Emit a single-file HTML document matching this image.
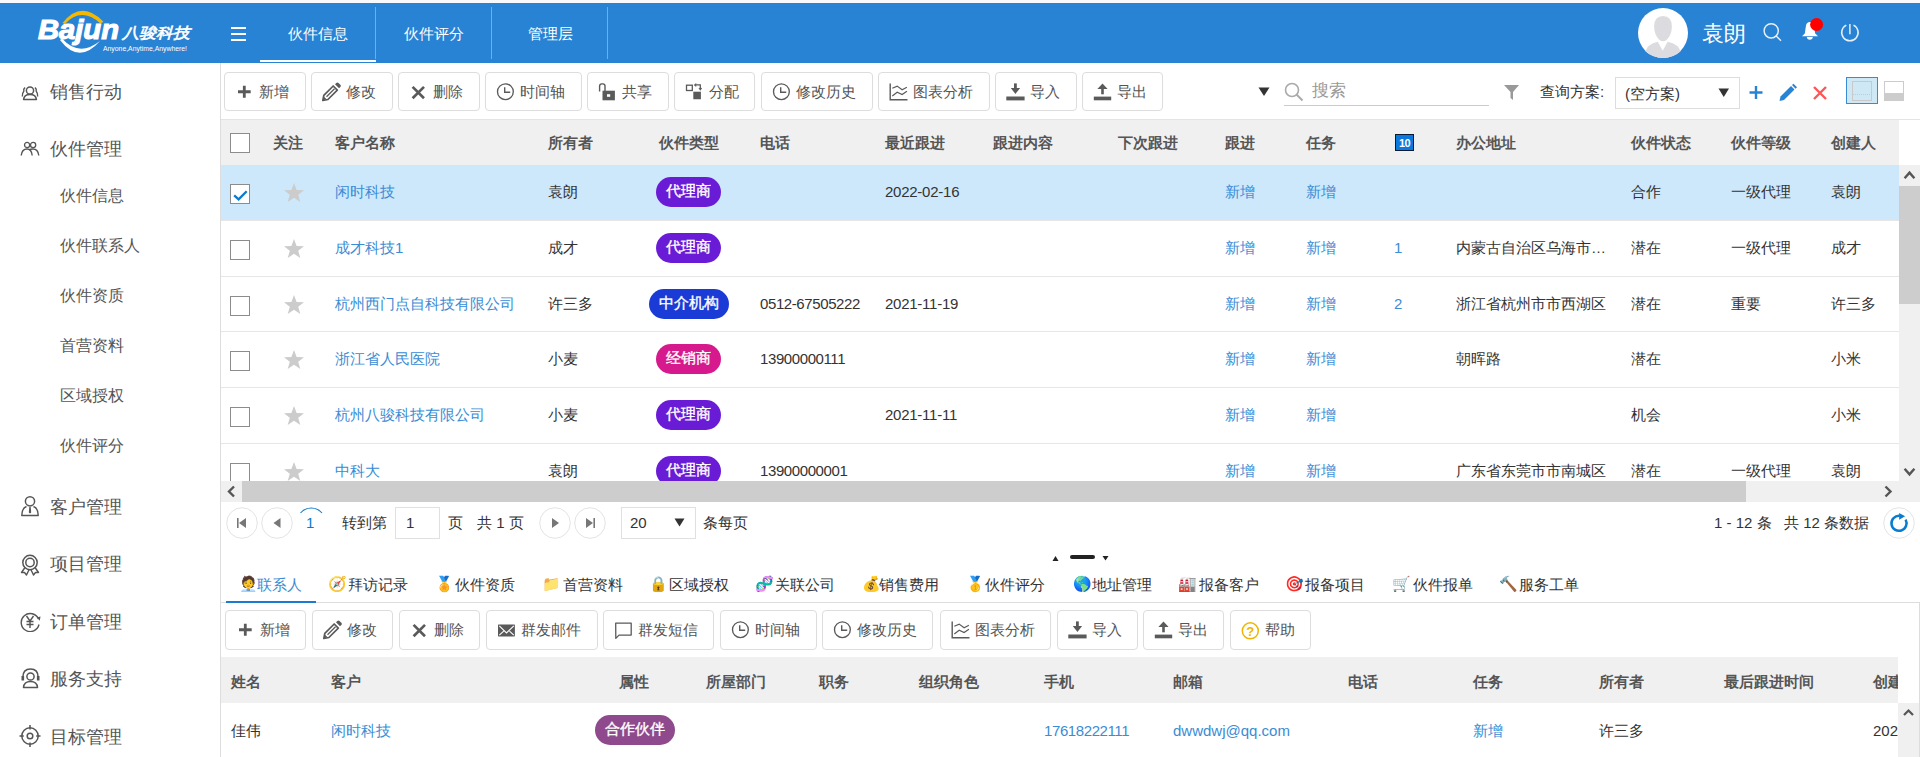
<!DOCTYPE html><html><head><meta charset="utf-8"><style>
html,body{margin:0;padding:0;width:1920px;height:757px;overflow:hidden;background:#fff;font-family:"Liberation Sans",sans-serif;}
.a{position:absolute;box-sizing:border-box;}
.t{position:absolute;white-space:nowrap;}
svg text{font-family:"Liberation Sans",sans-serif;}
</style></head><body>

<div class="a" style="left:0px;top:0px;width:1920px;height:3px;background:#f8f9fa"></div>
<div class="a" style="left:0px;top:3px;width:1920px;height:59.7px;background:#2883d4"></div>
<svg class="a" style="left:34px;top:8px;" width="160" height="48" viewBox="0 0 160 48">
<path d="M28.5 15 Q47.5 -8.75 69.5 13.7 L66.5 15.5 Q47 -1.5 31 16 Z" fill="#f5b800"/>
<path d="M26 32 Q45 57 66 33 Q45 49.5 28 30.5 Z" fill="#fff"/>
<text x="4" y="30.5" font-family="Liberation Sans" font-weight="bold" font-style="italic" font-size="27" fill="#fff" stroke="#fff" stroke-width="1.1" textLength="81" lengthAdjust="spacingAndGlyphs">Bajun</text>
<text x="88" y="29.8" font-size="15" fill="#fff" stroke="#fff" stroke-width="0.6" font-style="italic" textLength="68" lengthAdjust="spacingAndGlyphs">八骏科技</text>
<text x="69" y="42.5" font-family="Liberation Sans" font-size="7.2" fill="#fff" textLength="84" lengthAdjust="spacingAndGlyphs">Anyone,Anytime,Anywhere!</text>
</svg>
<div class="a" style="left:231px;top:27px;width:15px;height:2px;background:#fff"></div>
<div class="a" style="left:231px;top:33px;width:15px;height:2px;background:#fff"></div>
<div class="a" style="left:231px;top:39px;width:15px;height:2px;background:#fff"></div>
<div class="a" style="left:375px;top:7px;width:1px;height:52px;background:rgba(255,255,255,0.35)"></div>
<div class="t" style="left:260px;top:22px;width:116px;text-align:center;font-size:15px;line-height:24px;color:#fff">伙件信息</div>
<div class="a" style="left:491px;top:7px;width:1px;height:52px;background:rgba(255,255,255,0.35)"></div>
<div class="t" style="left:376px;top:22px;width:116px;text-align:center;font-size:15px;line-height:24px;color:#fff">伙件评分</div>
<div class="a" style="left:607px;top:7px;width:1px;height:52px;background:rgba(255,255,255,0.35)"></div>
<div class="t" style="left:492px;top:22px;width:116px;text-align:center;font-size:15px;line-height:24px;color:#fff">管理层</div>
<div class="a" style="left:260px;top:59.5px;width:116px;height:2.5px;background:#fff"></div>
<svg class="a" style="left:1638px;top:8px;" width="50" height="50" viewBox="0 0 50 50"><circle cx="25" cy="25" r="25" fill="#fff"/>
<path d="M25 7.9 Q33.9 7.9 33.9 18.5 Q33.6 27 28.8 31.8 Q25 34.8 21.2 31.8 Q16.4 27 16.1 18.5 Q16.1 7.9 25 7.9Z" fill="#dcdce0"/>
<path d="M7.5 43.5 Q9 36.5 19.8 33.8 L24.7 42.7 L29.7 33.8 Q41 36.5 42.5 43.5 Q35 50 25 50 Q15 50 7.5 43.5Z" fill="#dcdce0"/></svg>
<div class="t" style="left:1701.5px;top:18.5px;font-size:21.5px;line-height:30px;color:#fff;font-weight:normal;">袁朗</div>
<svg class="a" style="left:1762px;top:22px;" width="22" height="22" viewBox="0 0 22 22"><circle cx="9.2" cy="8.85" r="7.1" fill="none" stroke="#e9eff6" stroke-width="1.45"/><line x1="14.2" y1="13.9" x2="19" y2="18.8" stroke="#e9eff6" stroke-width="1.45"/></svg>
<svg class="a" style="left:1800px;top:16px;" width="26" height="28" viewBox="0 0 26 28"><path d="M2 20.3 L4.8 17.5 L6 9.5 Q6.6 5.9 10 5.9 Q13.4 5.9 14 9.5 L15.2 17.5 L18 20.3 Z" fill="#fff"/><path d="M6.8 21 H12.8 Q12.5 23.8 9.8 23.8 Q7.1 23.8 6.8 21 Z" fill="#fff"/><circle cx="16.6" cy="8.5" r="6.5" fill="#f00"/></svg>
<svg class="a" style="left:1840px;top:22px;" width="22" height="22" viewBox="0 0 22 22"><path d="M6.3 3.2 A8.2 8.2 0 1 0 13.5 3.2" fill="none" stroke="#e9eff6" stroke-width="1.5"/><line x1="9.9" y1="2" x2="9.9" y2="12.2" stroke="#e9eff6" stroke-width="1.5"/></svg>
<div class="t" style="left:50px;top:78.0px;font-size:18px;line-height:28px;color:#555;font-weight:normal;">销售行动</div>
<svg class="a" style="left:20px;top:84px;" width="20" height="20" viewBox="0 0 20 20"><circle cx="10" cy="6.5" r="3.6" fill="none" stroke="#555" stroke-width="1.5"/><path d="M3.6 15.5 Q4 10.5 10 10.5 Q16 10.5 16.4 15.5 Z" fill="none" stroke="#555" stroke-width="1.6" stroke-linejoin="round"/><path d="M5.2 3.6 Q3.4 4.4 3.8 7.2 Q2.2 8.8 2.3 12.5" fill="none" stroke="#555" stroke-width="1.35"/><path d="M14.8 3.6 Q16.6 4.4 16.2 7.2 Q17.8 8.8 17.7 12.5" fill="none" stroke="#555" stroke-width="1.35"/></svg>
<div class="t" style="left:50px;top:135.0px;font-size:18px;line-height:28px;color:#555;font-weight:normal;">伙件管理</div>
<svg class="a" style="left:20px;top:140px;" width="20" height="17" viewBox="0 0 20 17"><circle cx="7.1" cy="5" r="2.6" fill="none" stroke="#555" stroke-width="1.3"/><circle cx="13.1" cy="5" r="2.6" fill="none" stroke="#555" stroke-width="1.3"/><path d="M1.2 15.5 Q2 9 7 9 Q11.5 9 12.2 15.5" fill="none" stroke="#555" stroke-width="1.4"/><path d="M9.5 9.6 Q10.5 9 13 9 Q18 9 18.8 15.5" fill="none" stroke="#555" stroke-width="1.4"/></svg>
<div class="t" style="left:50px;top:493.0px;font-size:18px;line-height:28px;color:#555;font-weight:normal;">客户管理</div>
<svg class="a" style="left:20px;top:495px;" width="20" height="22" viewBox="0 0 20 22"><circle cx="10" cy="6.3" r="4.6" fill="none" stroke="#555" stroke-width="1.5"/><path d="M6.5 11.5 Q2 13 1.8 20.5 H18.2 Q18 13 13.5 11.5" fill="none" stroke="#555" stroke-width="1.5" stroke-linejoin="round"/><path d="M9.3 12 H10.7 L11.2 17.5 L10 18.5 L8.8 17.5 Z" fill="#555"/></svg>
<div class="t" style="left:50px;top:550.0px;font-size:18px;line-height:28px;color:#555;font-weight:normal;">项目管理</div>
<svg class="a" style="left:20px;top:554px;" width="20" height="22" viewBox="0 0 20 22"><circle cx="10" cy="8.5" r="7.2" fill="none" stroke="#555" stroke-width="1.5"/><circle cx="10" cy="8.5" r="4.2" fill="none" stroke="#555" stroke-width="1.5"/><path d="M5 13.5 L1.5 18.5 L4.5 18.5 L6.5 21 L9 15.8 M15 13.5 L18.5 18.5 L15.5 18.5 L13.5 21 L11 15.8" fill="none" stroke="#555" stroke-width="1.4" stroke-linejoin="round"/></svg>
<div class="t" style="left:50px;top:608.0px;font-size:18px;line-height:28px;color:#555;font-weight:normal;">订单管理</div>
<svg class="a" style="left:20px;top:611px;" width="21" height="21" viewBox="0 0 21 21"><path d="M18.5 8 A9 9 0 1 0 19 13.5" fill="none" stroke="#555" stroke-width="1.4"/><path d="M16.8 6.5 L19.8 9.8 L20.5 5.5 Z" fill="#555"/><path d="M6.5 5 L10 10 L13.5 5 M10 10 V17 M6.5 10.5 H13.5 M6.5 13.5 H13.5" fill="none" stroke="#555" stroke-width="1.4"/></svg>
<div class="t" style="left:50px;top:665.0px;font-size:18px;line-height:28px;color:#555;font-weight:normal;">服务支持</div>
<svg class="a" style="left:20px;top:667px;" width="21" height="22" viewBox="0 0 21 22"><path d="M2.8 10.5 Q2.8 2 10.5 2 Q18.2 2 18.2 10.5" fill="none" stroke="#555" stroke-width="1.5"/><rect x="1.5" y="9" width="2.6" height="4.5" fill="#555"/><rect x="16.9" y="9" width="2.6" height="4.5" fill="#555"/><circle cx="10.5" cy="9.5" r="3.6" fill="none" stroke="#555" stroke-width="1.5"/><path d="M3.5 20.5 Q4 14.5 10.5 14.5 Q17 14.5 17.5 20.5 Z" fill="none" stroke="#555" stroke-width="1.5" stroke-linejoin="round"/></svg>
<div class="t" style="left:50px;top:723.0px;font-size:18px;line-height:28px;color:#555;font-weight:normal;">目标管理</div>
<svg class="a" style="left:19px;top:723px;" width="22" height="26" viewBox="0 0 22 26"><circle cx="11" cy="13" r="8.2" fill="none" stroke="#555" stroke-width="1.5"/><circle cx="11" cy="13" r="2.8" fill="none" stroke="#555" stroke-width="1.5"/><path d="M11 2 V6.5 M11 19.5 V24 M0.5 13 H4.8 M17.2 13 H21.5" stroke="#555" stroke-width="1.5"/></svg>
<div class="t" style="left:60px;top:184.0px;font-size:16px;line-height:24px;color:#555;font-weight:normal;">伙件信息</div>
<div class="t" style="left:60px;top:234.0px;font-size:16px;line-height:24px;color:#555;font-weight:normal;">伙件联系人</div>
<div class="t" style="left:60px;top:284.0px;font-size:16px;line-height:24px;color:#555;font-weight:normal;">伙件资质</div>
<div class="t" style="left:60px;top:334.0px;font-size:16px;line-height:24px;color:#555;font-weight:normal;">首营资料</div>
<div class="t" style="left:60px;top:384.0px;font-size:16px;line-height:24px;color:#555;font-weight:normal;">区域授权</div>
<div class="t" style="left:60px;top:434.0px;font-size:16px;line-height:24px;color:#555;font-weight:normal;">伙件评分</div>
<div class="a" style="left:220px;top:63px;width:1px;height:694px;background:#ddd"></div>
<div class="a" style="left:224px;top:72px;width:82px;height:39px;border:1px solid #ddd;border-radius:4px;background:#fff"></div>
<svg class="a" style="left:235px;top:81.5px;" width="20" height="20" viewBox="0 0 20 20"><path d="M9.3 3.7 V15.8 M3 9.75 H15.7" stroke="#5a5a5a" stroke-width="2.8" fill="none"/></svg>
<div class="t" style="left:259px;top:80.5px;font-size:15px;line-height:22px;color:#555;font-weight:normal;">新增</div>
<div class="a" style="left:311px;top:72px;width:82px;height:39px;border:1px solid #ddd;border-radius:4px;background:#fff"></div>
<svg class="a" style="left:322px;top:81.5px;" width="20" height="20" viewBox="0 0 20 20"><path d="M1.8 13.4 L11.2 4 L15.3 8.1 L5.9 17.5 L0.8 18.5 Z" fill="none" stroke="#5a5a5a" stroke-width="1.7" stroke-linejoin="round"/><path d="M1.2 18.1 L1.8 14.6 L4.8 17.5 Z" fill="#5a5a5a"/><path d="M13 2.2 L14.3 0.9 Q15.4 -0.1 16.5 1 L18.3 2.8 Q19.4 3.9 18.3 5 L17 6.3 Z" fill="#5a5a5a"/><path d="M4.5 14.8 L12.5 6.8" stroke="#5a5a5a" stroke-width="1.3"/></svg>
<div class="t" style="left:346px;top:80.5px;font-size:15px;line-height:22px;color:#555;font-weight:normal;">修改</div>
<div class="a" style="left:398px;top:72px;width:82px;height:39px;border:1px solid #ddd;border-radius:4px;background:#fff"></div>
<svg class="a" style="left:409px;top:81.5px;" width="20" height="20" viewBox="0 0 20 20"><path d="M3.6 4.9 L15 16.2 M15 4.9 L3.6 16.2" stroke="#5a5a5a" stroke-width="2.7" fill="none"/></svg>
<div class="t" style="left:433px;top:80.5px;font-size:15px;line-height:22px;color:#555;font-weight:normal;">删除</div>
<div class="a" style="left:485px;top:72px;width:97px;height:39px;border:1px solid #ddd;border-radius:4px;background:#fff"></div>
<svg class="a" style="left:496px;top:81.5px;" width="20" height="20" viewBox="0 0 20 20"><circle cx="9.4" cy="9.7" r="7.9" fill="none" stroke="#5a5a5a" stroke-width="1.35"/><path d="M8.7 5.2 V10.2 H14.2" stroke="#5a5a5a" stroke-width="1.4" fill="none"/></svg>
<div class="t" style="left:520px;top:80.5px;font-size:15px;line-height:22px;color:#555;font-weight:normal;">时间轴</div>
<div class="a" style="left:587px;top:72px;width:82px;height:39px;border:1px solid #ddd;border-radius:4px;background:#fff"></div>
<svg class="a" style="left:598px;top:81.5px;" width="20" height="20" viewBox="0 0 20 20"><path d="M1.6 9.4 V4.1 Q1.6 1.9 3.8 1.9 H4.9 Q7 1.9 7 4.1 V9" stroke="#5a5a5a" stroke-width="1.4" fill="none"/><rect x="4.5" y="8.7" width="12.4" height="9.6" fill="#5a5a5a"/><rect x="9" y="12.2" width="3.2" height="2.6" fill="#fff"/></svg>
<div class="t" style="left:622px;top:80.5px;font-size:15px;line-height:22px;color:#555;font-weight:normal;">共享</div>
<div class="a" style="left:674px;top:72px;width:81px;height:39px;border:1px solid #ddd;border-radius:4px;background:#fff"></div>
<svg class="a" style="left:685px;top:81.5px;" width="20" height="20" viewBox="0 0 20 20"><rect x="1.5" y="3.2" width="5.8" height="5.3" fill="none" stroke="#5a5a5a" stroke-width="1.3"/><rect x="8.3" y="9.7" width="7.6" height="7.55" fill="#5a5a5a"/><path d="M10.2 2.9 H15.3 V7" stroke="#5a5a5a" stroke-width="1.3" fill="none"/><path d="M11.3 1.6 L9.6 2.9 L11.3 4.2 M14 6 L15.3 7.8 L16.6 6" stroke="#5a5a5a" stroke-width="1.1" fill="none"/></svg>
<div class="t" style="left:709px;top:80.5px;font-size:15px;line-height:22px;color:#555;font-weight:normal;">分配</div>
<div class="a" style="left:761px;top:72px;width:112px;height:39px;border:1px solid #ddd;border-radius:4px;background:#fff"></div>
<svg class="a" style="left:772px;top:81.5px;" width="20" height="20" viewBox="0 0 20 20"><circle cx="9.4" cy="9.7" r="7.9" fill="none" stroke="#5a5a5a" stroke-width="1.35"/><path d="M8.7 5.2 V10.2 H14.2" stroke="#5a5a5a" stroke-width="1.4" fill="none"/></svg>
<div class="t" style="left:796px;top:80.5px;font-size:15px;line-height:22px;color:#555;font-weight:normal;">修改历史</div>
<div class="a" style="left:878px;top:72px;width:112px;height:39px;border:1px solid #ddd;border-radius:4px;background:#fff"></div>
<svg class="a" style="left:889px;top:81.5px;" width="20" height="20" viewBox="0 0 20 20"><path d="M1.2 1.5 V17.8 H18.5" stroke="#5a5a5a" stroke-width="1.4" fill="none"/><path d="M3.3 6.3 L8.2 4.1 L13.1 7.7 L17.9 5.3 M3.3 13.9 L8.2 10.2 L13.1 12.6 L17.9 9.3" stroke="#5a5a5a" stroke-width="1.2" fill="none"/></svg>
<div class="t" style="left:913px;top:80.5px;font-size:15px;line-height:22px;color:#555;font-weight:normal;">图表分析</div>
<div class="a" style="left:995px;top:72px;width:82px;height:39px;border:1px solid #ddd;border-radius:4px;background:#fff"></div>
<svg class="a" style="left:1006px;top:81.5px;" width="20" height="20" viewBox="0 0 20 20"><rect x="8" y="1.4" width="2.8" height="5" fill="#5a5a5a"/><path d="M4.8 5.9 H14.1 L9.45 11.9 Z" fill="#5a5a5a"/><rect x="0.3" y="14.5" width="18.3" height="3.9" fill="#5a5a5a"/></svg>
<div class="t" style="left:1030px;top:80.5px;font-size:15px;line-height:22px;color:#555;font-weight:normal;">导入</div>
<div class="a" style="left:1082px;top:72px;width:81px;height:39px;border:1px solid #ddd;border-radius:4px;background:#fff"></div>
<svg class="a" style="left:1093px;top:81.5px;" width="20" height="20" viewBox="0 0 20 20"><path d="M9.5 1.4 L14.6 7.1 H4.4 Z" fill="#5a5a5a"/><rect x="8.2" y="7" width="2.6" height="5.3" fill="#5a5a5a"/><rect x="0.8" y="14.6" width="17.4" height="3.7" fill="#5a5a5a"/></svg>
<div class="t" style="left:1117px;top:80.5px;font-size:15px;line-height:22px;color:#555;font-weight:normal;">导出</div>
<svg class="a" style="left:1258px;top:87px;" width="13" height="10" viewBox="0 0 13 10"><path d="M0.5 0.5 H11.5 L6 9 Z" fill="#333"/></svg>
<svg class="a" style="left:1284px;top:82px;" width="22" height="22" viewBox="0 0 22 22"><circle cx="8" cy="8" r="6.5" fill="none" stroke="#aaa" stroke-width="1.6"/><line x1="12.5" y1="12.5" x2="18.5" y2="18.5" stroke="#aaa" stroke-width="2"/></svg>
<div class="t" style="left:1312px;top:79.0px;font-size:17px;line-height:24px;color:#999;font-weight:normal;">搜索</div>
<div class="a" style="left:1284px;top:105px;width:205px;height:1px;background:#ccc"></div>
<svg class="a" style="left:1503px;top:84px;" width="18" height="18" viewBox="0 0 18 18"><path d="M1 1 H16 L10 8 V16 L7.5 14 V8 Z" fill="#999"/></svg>
<div class="t" style="left:1540px;top:81.0px;font-size:15px;line-height:22px;color:#333;font-weight:normal;">查询方案:</div>
<div class="a" style="left:1615px;top:77px;width:125px;height:32px;border:1px solid #ddd;background:#fff"></div>
<div class="t" style="left:1625px;top:83.0px;font-size:15px;line-height:22px;color:#333;font-weight:normal;">(空方案)</div>
<svg class="a" style="left:1718px;top:88px;" width="12" height="10" viewBox="0 0 12 10"><path d="M0.5 0.5 H11 L5.75 9 Z" fill="#333"/></svg>
<svg class="a" style="left:1748px;top:84px;" width="16" height="16" viewBox="0 0 16 16"><path d="M8 2 V15 M1.5 8.5 H14.5" stroke="#2883d4" stroke-width="2.4"/></svg>
<svg class="a" style="left:1778px;top:83px;" width="20" height="20" viewBox="0 0 20 20"><path d="M1.5 18 L2.5 13.5 L13 3 L16.5 6.5 L6 17 Z" fill="#2883d4"/><path d="M14 2 L15.5 0.8 L19 4.3 L17.5 5.8Z" fill="#2883d4"/></svg>
<svg class="a" style="left:1812px;top:85px;" width="16" height="16" viewBox="0 0 16 16"><path d="M2 2 L14 14 M14 2 L2 14" stroke="#f55" stroke-width="2.4"/></svg>
<div class="a" style="left:1846px;top:77px;width:32px;height:27px;border:1.5px solid #3a8bd6;background:#cfe8f5"></div>
<div class="a" style="left:1852px;top:81px;width:20px;height:20px;border:1px solid #cdc8c8;"></div>
<div class="a" style="left:1852px;top:93.5px;width:20px;height:1px;border-top:1px dotted #cdc8c8;"></div>
<div class="a" style="left:1884px;top:81px;width:20px;height:20px;border:1.5px solid #ccc;background:linear-gradient(#fff 0 60%,#ccc 60%)"></div>
<div class="a" style="left:221px;top:119px;width:1678px;height:46px;background:#f0f0f0"></div>
<div class="a" style="left:221px;top:119px;width:1699px;height:1px;background:#e3e3e3"></div>
<div class="t" style="left:273px;top:132.0px;font-size:15px;line-height:22px;color:#555;font-weight:bold;">关注</div>
<div class="t" style="left:335px;top:132.0px;font-size:15px;line-height:22px;color:#555;font-weight:bold;">客户名称</div>
<div class="t" style="left:548px;top:132.0px;font-size:15px;line-height:22px;color:#555;font-weight:bold;">所有者</div>
<div class="t" style="left:659px;top:132.0px;font-size:15px;line-height:22px;color:#555;font-weight:bold;">伙件类型</div>
<div class="t" style="left:760px;top:132.0px;font-size:15px;line-height:22px;color:#555;font-weight:bold;">电话</div>
<div class="t" style="left:885px;top:132.0px;font-size:15px;line-height:22px;color:#555;font-weight:bold;">最近跟进</div>
<div class="t" style="left:993px;top:132.0px;font-size:15px;line-height:22px;color:#555;font-weight:bold;">跟进内容</div>
<div class="t" style="left:1118px;top:132.0px;font-size:15px;line-height:22px;color:#555;font-weight:bold;">下次跟进</div>
<div class="t" style="left:1225px;top:132.0px;font-size:15px;line-height:22px;color:#555;font-weight:bold;">跟进</div>
<div class="t" style="left:1306px;top:132.0px;font-size:15px;line-height:22px;color:#555;font-weight:bold;">任务</div>
<div class="t" style="left:1456px;top:132.0px;font-size:15px;line-height:22px;color:#555;font-weight:bold;">办公地址</div>
<div class="t" style="left:1631px;top:132.0px;font-size:15px;line-height:22px;color:#555;font-weight:bold;">伙件状态</div>
<div class="t" style="left:1731px;top:132.0px;font-size:15px;line-height:22px;color:#555;font-weight:bold;">伙件等级</div>
<div class="t" style="left:1831px;top:132.0px;font-size:15px;line-height:22px;color:#555;font-weight:bold;">创建人</div>
<div class="a" style="left:230px;top:133px;width:20px;height:20px;border:1px solid #8c8c8c;background:#fff"></div>
<svg class="a" style="left:1395px;top:134px;" width="19" height="17" viewBox="0 0 19 17"><rect x="0.5" y="0.5" width="18" height="16" fill="#0a78dc" stroke="#0b1a33" stroke-width="1"/><text x="9.6" y="12.8" text-anchor="middle" font-weight="bold" font-size="11" fill="#fff" letter-spacing="-0.6">10</text></svg>
<div class="a" style="left:221px;top:165px;width:1678px;height:316px;overflow:hidden">
<div class="a" style="left:0;top:0px;width:1678px;height:56px;background:#cde8fb;border-bottom:1px solid #e6e6e6"></div>
<div class="a" style="left:0;top:56px;width:1678px;height:56px;background:#fff;border-bottom:1px solid #e6e6e6"></div>
<div class="a" style="left:0;top:112px;width:1678px;height:55px;background:#fff;border-bottom:1px solid #e6e6e6"></div>
<div class="a" style="left:0;top:167px;width:1678px;height:56px;background:#fff;border-bottom:1px solid #e6e6e6"></div>
<div class="a" style="left:0;top:223px;width:1678px;height:56px;background:#fff;border-bottom:1px solid #e6e6e6"></div>
<div class="a" style="left:0;top:279px;width:1678px;height:55px;background:#fff;border-bottom:1px solid #e6e6e6"></div>
</div>
<div class="a" style="left:0;top:165px;width:1899px;height:316px;overflow:hidden">
<div class="a" style="left:230px;top:19px;width:20px;height:20px;border:1px solid #8c8c8c;background:#fff"></div>
<svg class="a" style="left:230px;top:19px;" width="20" height="20" viewBox="0 0 20 20"><path d="M4.2 11.3 L8.6 15.3 L16.7 7.2" stroke="#0a7bd0" stroke-width="2.3" fill="none"/></svg>
<svg class="a" style="left:283px;top:16.69999999999999px;" width="22" height="21" viewBox="0 0 22 21"><path d="M11 1 L13.6 8 L21 8.2 L15.2 12.8 L17.3 20 L11 15.8 L4.7 20 L6.8 12.8 L1 8.2 L8.4 8 Z" fill="#ccc"/></svg>
<div class="t" style="left:335px;top:16.2px;font-size:15px;line-height:22px;color:#3a8cd5;font-weight:normal;">闲时科技</div>
<div class="t" style="left:548px;top:16.2px;font-size:15px;line-height:22px;color:#333;font-weight:normal;">袁朗</div>
<div class="t" style="left:656px;top:12.2px;width:65px;height:30px;border-radius:15px;background:#6a1bd6;color:#fff;font-size:15px;line-height:28px;-webkit-text-stroke:0.35px #fff;text-align:center">代理商</div>
<div class="t" style="left:885px;top:16.2px;font-size:15px;line-height:22px;color:#333;font-weight:normal;letter-spacing:-0.25px">2022-02-16</div>
<div class="t" style="left:1225px;top:16.2px;font-size:15px;line-height:22px;color:#3a8cd5;font-weight:normal;">新增</div>
<div class="t" style="left:1306px;top:16.2px;font-size:15px;line-height:22px;color:#3a8cd5;font-weight:normal;">新增</div>
<div class="t" style="left:1631px;top:16.2px;font-size:15px;line-height:22px;color:#333;font-weight:normal;">合作</div>
<div class="t" style="left:1731px;top:16.2px;font-size:15px;line-height:22px;color:#333;font-weight:normal;">一级代理</div>
<div class="t" style="left:1831px;top:16.2px;font-size:15px;line-height:22px;color:#333;font-weight:normal;">袁朗</div>
<div class="a" style="left:230px;top:75px;width:20px;height:20px;border:1px solid #8c8c8c;background:#fff"></div>
<svg class="a" style="left:283px;top:72.69999999999999px;" width="22" height="21" viewBox="0 0 22 21"><path d="M11 1 L13.6 8 L21 8.2 L15.2 12.8 L17.3 20 L11 15.8 L4.7 20 L6.8 12.8 L1 8.2 L8.4 8 Z" fill="#ccc"/></svg>
<div class="t" style="left:335px;top:72.2px;font-size:15px;line-height:22px;color:#3a8cd5;font-weight:normal;">成才科技1</div>
<div class="t" style="left:548px;top:72.2px;font-size:15px;line-height:22px;color:#333;font-weight:normal;">成才</div>
<div class="t" style="left:656px;top:68.2px;width:65px;height:30px;border-radius:15px;background:#6a1bd6;color:#fff;font-size:15px;line-height:28px;-webkit-text-stroke:0.35px #fff;text-align:center">代理商</div>
<div class="t" style="left:1225px;top:72.2px;font-size:15px;line-height:22px;color:#3a8cd5;font-weight:normal;">新增</div>
<div class="t" style="left:1306px;top:72.2px;font-size:15px;line-height:22px;color:#3a8cd5;font-weight:normal;">新增</div>
<div class="t" style="left:1394px;top:72.2px;font-size:15px;line-height:22px;color:#3a8cd5;font-weight:normal;">1</div>
<div class="t" style="left:1456px;top:72.2px;font-size:15px;line-height:22px;color:#333;font-weight:normal;">内蒙古自治区乌海市…</div>
<div class="t" style="left:1631px;top:72.2px;font-size:15px;line-height:22px;color:#333;font-weight:normal;">潜在</div>
<div class="t" style="left:1731px;top:72.2px;font-size:15px;line-height:22px;color:#333;font-weight:normal;">一级代理</div>
<div class="t" style="left:1831px;top:72.2px;font-size:15px;line-height:22px;color:#333;font-weight:normal;">成才</div>
<div class="a" style="left:230px;top:131px;width:20px;height:20px;border:1px solid #8c8c8c;background:#fff"></div>
<svg class="a" style="left:283px;top:128.7px;" width="22" height="21" viewBox="0 0 22 21"><path d="M11 1 L13.6 8 L21 8.2 L15.2 12.8 L17.3 20 L11 15.8 L4.7 20 L6.8 12.8 L1 8.2 L8.4 8 Z" fill="#ccc"/></svg>
<div class="t" style="left:335px;top:128.2px;font-size:15px;line-height:22px;color:#3a8cd5;font-weight:normal;">杭州西门点自科技有限公司</div>
<div class="t" style="left:548px;top:128.2px;font-size:15px;line-height:22px;color:#333;font-weight:normal;">许三多</div>
<div class="t" style="left:649px;top:124.2px;width:80px;height:30px;border-radius:15px;background:#1a3bd6;color:#fff;font-size:15px;line-height:28px;-webkit-text-stroke:0.35px #fff;text-align:center">中介机构</div>
<div class="t" style="left:760px;top:128.2px;font-size:15px;line-height:22px;color:#333;font-weight:normal;letter-spacing:-0.4px">0512-67505222</div>
<div class="t" style="left:885px;top:128.2px;font-size:15px;line-height:22px;color:#333;font-weight:normal;letter-spacing:-0.25px">2021-11-19</div>
<div class="t" style="left:1225px;top:128.2px;font-size:15px;line-height:22px;color:#3a8cd5;font-weight:normal;">新增</div>
<div class="t" style="left:1306px;top:128.2px;font-size:15px;line-height:22px;color:#3a8cd5;font-weight:normal;">新增</div>
<div class="t" style="left:1394px;top:128.2px;font-size:15px;line-height:22px;color:#3a8cd5;font-weight:normal;">2</div>
<div class="t" style="left:1456px;top:128.2px;font-size:15px;line-height:22px;color:#333;font-weight:normal;">浙江省杭州市市西湖区</div>
<div class="t" style="left:1631px;top:128.2px;font-size:15px;line-height:22px;color:#333;font-weight:normal;">潜在</div>
<div class="t" style="left:1731px;top:128.2px;font-size:15px;line-height:22px;color:#333;font-weight:normal;">重要</div>
<div class="t" style="left:1831px;top:128.2px;font-size:15px;line-height:22px;color:#333;font-weight:normal;">许三多</div>
<div class="a" style="left:230px;top:186px;width:20px;height:20px;border:1px solid #8c8c8c;background:#fff"></div>
<svg class="a" style="left:283px;top:183.7px;" width="22" height="21" viewBox="0 0 22 21"><path d="M11 1 L13.6 8 L21 8.2 L15.2 12.8 L17.3 20 L11 15.8 L4.7 20 L6.8 12.8 L1 8.2 L8.4 8 Z" fill="#ccc"/></svg>
<div class="t" style="left:335px;top:183.2px;font-size:15px;line-height:22px;color:#3a8cd5;font-weight:normal;">浙江省人民医院</div>
<div class="t" style="left:548px;top:183.2px;font-size:15px;line-height:22px;color:#333;font-weight:normal;">小麦</div>
<div class="t" style="left:656px;top:179.2px;width:65px;height:30px;border-radius:15px;background:#d6198c;color:#fff;font-size:15px;line-height:28px;-webkit-text-stroke:0.35px #fff;text-align:center">经销商</div>
<div class="t" style="left:760px;top:183.2px;font-size:15px;line-height:22px;color:#333;font-weight:normal;letter-spacing:-0.4px">13900000111</div>
<div class="t" style="left:1225px;top:183.2px;font-size:15px;line-height:22px;color:#3a8cd5;font-weight:normal;">新增</div>
<div class="t" style="left:1306px;top:183.2px;font-size:15px;line-height:22px;color:#3a8cd5;font-weight:normal;">新增</div>
<div class="t" style="left:1456px;top:183.2px;font-size:15px;line-height:22px;color:#333;font-weight:normal;">朝晖路</div>
<div class="t" style="left:1631px;top:183.2px;font-size:15px;line-height:22px;color:#333;font-weight:normal;">潜在</div>
<div class="t" style="left:1831px;top:183.2px;font-size:15px;line-height:22px;color:#333;font-weight:normal;">小米</div>
<div class="a" style="left:230px;top:242px;width:20px;height:20px;border:1px solid #8c8c8c;background:#fff"></div>
<svg class="a" style="left:283px;top:239.7px;" width="22" height="21" viewBox="0 0 22 21"><path d="M11 1 L13.6 8 L21 8.2 L15.2 12.8 L17.3 20 L11 15.8 L4.7 20 L6.8 12.8 L1 8.2 L8.4 8 Z" fill="#ccc"/></svg>
<div class="t" style="left:335px;top:239.2px;font-size:15px;line-height:22px;color:#3a8cd5;font-weight:normal;">杭州八骏科技有限公司</div>
<div class="t" style="left:548px;top:239.2px;font-size:15px;line-height:22px;color:#333;font-weight:normal;">小麦</div>
<div class="t" style="left:656px;top:235.2px;width:65px;height:30px;border-radius:15px;background:#6a1bd6;color:#fff;font-size:15px;line-height:28px;-webkit-text-stroke:0.35px #fff;text-align:center">代理商</div>
<div class="t" style="left:885px;top:239.2px;font-size:15px;line-height:22px;color:#333;font-weight:normal;letter-spacing:-0.25px">2021-11-11</div>
<div class="t" style="left:1225px;top:239.2px;font-size:15px;line-height:22px;color:#3a8cd5;font-weight:normal;">新增</div>
<div class="t" style="left:1306px;top:239.2px;font-size:15px;line-height:22px;color:#3a8cd5;font-weight:normal;">新增</div>
<div class="t" style="left:1631px;top:239.2px;font-size:15px;line-height:22px;color:#333;font-weight:normal;">机会</div>
<div class="t" style="left:1831px;top:239.2px;font-size:15px;line-height:22px;color:#333;font-weight:normal;">小米</div>
<div class="a" style="left:230px;top:298px;width:20px;height:20px;border:1px solid #8c8c8c;background:#fff"></div>
<svg class="a" style="left:283px;top:295.7px;" width="22" height="21" viewBox="0 0 22 21"><path d="M11 1 L13.6 8 L21 8.2 L15.2 12.8 L17.3 20 L11 15.8 L4.7 20 L6.8 12.8 L1 8.2 L8.4 8 Z" fill="#ccc"/></svg>
<div class="t" style="left:335px;top:295.2px;font-size:15px;line-height:22px;color:#3a8cd5;font-weight:normal;">中科大</div>
<div class="t" style="left:548px;top:295.2px;font-size:15px;line-height:22px;color:#333;font-weight:normal;">袁朗</div>
<div class="t" style="left:656px;top:291.2px;width:65px;height:30px;border-radius:15px;background:#6a1bd6;color:#fff;font-size:15px;line-height:28px;-webkit-text-stroke:0.35px #fff;text-align:center">代理商</div>
<div class="t" style="left:760px;top:295.2px;font-size:15px;line-height:22px;color:#333;font-weight:normal;letter-spacing:-0.4px">13900000001</div>
<div class="t" style="left:1225px;top:295.2px;font-size:15px;line-height:22px;color:#3a8cd5;font-weight:normal;">新增</div>
<div class="t" style="left:1306px;top:295.2px;font-size:15px;line-height:22px;color:#3a8cd5;font-weight:normal;">新增</div>
<div class="t" style="left:1456px;top:295.2px;font-size:15px;line-height:22px;color:#333;font-weight:normal;">广东省东莞市市南城区</div>
<div class="t" style="left:1631px;top:295.2px;font-size:15px;line-height:22px;color:#333;font-weight:normal;">潜在</div>
<div class="t" style="left:1731px;top:295.2px;font-size:15px;line-height:22px;color:#333;font-weight:normal;">一级代理</div>
<div class="t" style="left:1831px;top:295.2px;font-size:15px;line-height:22px;color:#333;font-weight:normal;">袁朗</div>
</div>
<div class="a" style="left:1899px;top:165px;width:21px;height:316px;background:#f0f0f0"></div>
<div class="a" style="left:1899px;top:186px;width:21px;height:118px;background:#cdcdcd"></div>
<svg class="a" style="left:1899px;top:165px;" width="21" height="20" viewBox="0 0 21 20"><path d="M5.6 13.2 L10.5 7.6 L15.4 13.2" stroke="#555" stroke-width="2.4" fill="none"/></svg>
<svg class="a" style="left:1899px;top:461px;" width="21" height="20" viewBox="0 0 21 20"><path d="M5.6 7.8 L10.5 13.4 L15.4 7.8" stroke="#555" stroke-width="2.4" fill="none"/></svg>
<div class="a" style="left:221px;top:481px;width:1699px;height:20.5px;background:#f0f0f0"></div>
<div class="a" style="left:242px;top:481px;width:1504px;height:20.5px;background:#cdcdcd"></div>
<svg class="a" style="left:221px;top:481px;" width="20" height="20" viewBox="0 0 20 20"><path d="M13 5.5 L8 10.5 L13 15.5" stroke="#555" stroke-width="2.4" fill="none"/></svg>
<svg class="a" style="left:1878px;top:481px;" width="20" height="20" viewBox="0 0 20 20"><path d="M7.5 5.5 L12.5 10.5 L7.5 15.5" stroke="#555" stroke-width="2.4" fill="none"/></svg>
<svg class="a" style="left:225.75px;top:507px;" width="32" height="32" viewBox="0 0 32 32"><circle cx="16" cy="16" r="15.3" fill="#fff" stroke="#e3e3e3" stroke-width="1"/><rect x="11" y="11" width="1.6" height="10" fill="#777"/><path d="M20 11 V21 L13 16Z" fill="#777"/></svg>
<svg class="a" style="left:260.75px;top:507px;" width="32" height="32" viewBox="0 0 32 32"><circle cx="16" cy="16" r="15.3" fill="#fff" stroke="#e3e3e3" stroke-width="1"/><path d="M19.5 11 V21 L12.5 16Z" fill="#777"/></svg>
<svg class="a" style="left:295px;top:506px;" width="32" height="32" viewBox="0 0 32 32"><path d="M5.5 7 A14 14 0 0 1 27 7" stroke="#0a7bd0" stroke-width="1.1" fill="none"/></svg>
<div class="t" style="left:306px;top:512.0px;font-size:15px;line-height:22px;color:#0a7bd0;font-weight:normal;">1</div>
<div class="t" style="left:342px;top:512.0px;font-size:15px;line-height:22px;color:#333;font-weight:normal;">转到第</div>
<div class="a" style="left:395px;top:507px;width:45px;height:32px;border:1px solid #e0e0e0;background:#fff"></div>
<div class="t" style="left:406px;top:512.0px;font-size:15px;line-height:22px;color:#333;font-weight:normal;">1</div>
<div class="t" style="left:448px;top:512.0px;font-size:15px;line-height:22px;color:#333;font-weight:normal;">页</div>
<div class="t" style="left:477px;top:512.0px;font-size:15px;line-height:22px;color:#333;font-weight:normal;">共 1 页</div>
<svg class="a" style="left:538.5px;top:507px;" width="32" height="32" viewBox="0 0 32 32"><circle cx="16" cy="16" r="15.3" fill="#fff" stroke="#e3e3e3" stroke-width="1"/><path d="M13 11 V21 L20 16Z" fill="#777"/></svg>
<svg class="a" style="left:573.5px;top:507px;" width="32" height="32" viewBox="0 0 32 32"><circle cx="16" cy="16" r="15.3" fill="#fff" stroke="#e3e3e3" stroke-width="1"/><path d="M12 11 V21 L19 16Z" fill="#777"/><rect x="19.4" y="11" width="1.6" height="10" fill="#777"/></svg>
<div class="a" style="left:621px;top:507px;width:75px;height:32px;border:1px solid #e0e0e0;background:#fff"></div>
<div class="t" style="left:630px;top:512.0px;font-size:15px;line-height:22px;color:#333;font-weight:normal;">20</div>
<svg class="a" style="left:674px;top:518px;" width="11" height="9" viewBox="0 0 11 9"><path d="M0.5 0.5 H10.5 L5.5 8.5 Z" fill="#333"/></svg>
<div class="t" style="left:703px;top:512.0px;font-size:15px;line-height:22px;color:#333;font-weight:normal;">条每页</div>
<div class="t" style="left:1714px;top:512.0px;font-size:15px;line-height:22px;color:#333;font-weight:normal;">1 - 12 条&nbsp;&nbsp;&nbsp;共 12 条数据</div>
<svg class="a" style="left:1883px;top:507px;" width="32" height="32" viewBox="0 0 32 32"><circle cx="16" cy="16" r="15.3" fill="#fff" stroke="#e3e3e3" stroke-width="1"/><path d="M22.6 12.6 A7.55 7.55 0 1 1 16.6 8.75" stroke="#0a7bd0" stroke-width="2.5" fill="none"/><path d="M16.1 5.9 L22.1 9.3 L16.1 12.7 Z" fill="#0a7bd0"/></svg>
<svg class="a" style="left:1052px;top:555px;" width="8" height="7" viewBox="0 0 8 7"><path d="M0.5 6 L3.5 1 L6.5 6Z" fill="#222"/></svg>
<div class="a" style="left:1070px;top:555px;width:25px;height:3.6px;background:#222;border-radius:2px"></div>
<svg class="a" style="left:1102px;top:555px;" width="8" height="7" viewBox="0 0 8 7"><path d="M0.5 1 H6.5 L3.5 5.5Z" fill="#222"/></svg>
<div class="t" style="left:239px;top:573.3px;font-size:15px;line-height:22px;color:#333;font-weight:normal;">🧑‍💼</div>
<div class="t" style="left:256.5px;top:574.0px;font-size:15px;line-height:22px;color:#3a8cd5;font-weight:normal;">联系人</div>
<div class="t" style="left:328px;top:573.3px;font-size:15px;line-height:22px;color:#333;font-weight:normal;">🧭</div>
<div class="t" style="left:347.95px;top:574.0px;font-size:15px;line-height:22px;color:#333;font-weight:normal;">拜访记录</div>
<div class="t" style="left:435px;top:573.3px;font-size:15px;line-height:22px;color:#333;font-weight:normal;">🏅</div>
<div class="t" style="left:455.45px;top:574.0px;font-size:15px;line-height:22px;color:#333;font-weight:normal;">伙件资质</div>
<div class="t" style="left:541.75px;top:573.3px;font-size:15px;line-height:22px;color:#333;font-weight:normal;">📁</div>
<div class="t" style="left:562.8000000000001px;top:574.0px;font-size:15px;line-height:22px;color:#333;font-weight:normal;">首营资料</div>
<div class="t" style="left:649px;top:573.3px;font-size:15px;line-height:22px;color:#333;font-weight:normal;">🔒</div>
<div class="t" style="left:669.0px;top:574.0px;font-size:15px;line-height:22px;color:#333;font-weight:normal;">区域授权</div>
<div class="t" style="left:755.3px;top:573.3px;font-size:15px;line-height:22px;color:#333;font-weight:normal;">🧬</div>
<div class="t" style="left:775.3000000000001px;top:574.0px;font-size:15px;line-height:22px;color:#333;font-weight:normal;">关联公司</div>
<div class="t" style="left:861.6px;top:573.3px;font-size:15px;line-height:22px;color:#333;font-weight:normal;">💰</div>
<div class="t" style="left:879.2px;top:574.0px;font-size:15px;line-height:22px;color:#333;font-weight:normal;">销售费用</div>
<div class="t" style="left:965.5px;top:573.3px;font-size:15px;line-height:22px;color:#333;font-weight:normal;">🥇</div>
<div class="t" style="left:985.45px;top:574.0px;font-size:15px;line-height:22px;color:#333;font-weight:normal;">伙件评分</div>
<div class="t" style="left:1072.5px;top:573.3px;font-size:15px;line-height:22px;color:#333;font-weight:normal;">🌎</div>
<div class="t" style="left:1091.7px;top:574.0px;font-size:15px;line-height:22px;color:#333;font-weight:normal;">地址管理</div>
<div class="t" style="left:1178px;top:573.3px;font-size:15px;line-height:22px;color:#333;font-weight:normal;">🏭</div>
<div class="t" style="left:1198.7px;top:574.0px;font-size:15px;line-height:22px;color:#333;font-weight:normal;">报备客户</div>
<div class="t" style="left:1285px;top:573.3px;font-size:15px;line-height:22px;color:#333;font-weight:normal;">🎯</div>
<div class="t" style="left:1305.0px;top:574.0px;font-size:15px;line-height:22px;color:#333;font-weight:normal;">报备项目</div>
<div class="t" style="left:1392px;top:573.3px;font-size:15px;line-height:22px;color:#333;font-weight:normal;">🛒</div>
<div class="t" style="left:1412.8px;top:574.0px;font-size:15px;line-height:22px;color:#333;font-weight:normal;">伙件报单</div>
<div class="t" style="left:1499px;top:573.3px;font-size:15px;line-height:22px;color:#333;font-weight:normal;">🔨</div>
<div class="t" style="left:1519.2px;top:574.0px;font-size:15px;line-height:22px;color:#333;font-weight:normal;">服务工单</div>
<div class="a" style="left:221px;top:602px;width:1699px;height:1px;background:#ddd"></div>
<div class="a" style="left:226px;top:600.5px;width:90px;height:2px;background:#1a7bd0"></div>
<div class="a" style="left:1919px;top:602px;width:1px;height:155px;background:#ddd"></div>
<div class="a" style="left:225px;top:610px;width:81px;height:40px;border:1px solid #ddd;border-radius:4px;background:#fff"></div>
<svg class="a" style="left:236px;top:620.0px;" width="20" height="20" viewBox="0 0 20 20"><path d="M9.3 3.7 V15.8 M3 9.75 H15.7" stroke="#5a5a5a" stroke-width="2.8" fill="none"/></svg>
<div class="t" style="left:260px;top:619.0px;font-size:15px;line-height:22px;color:#555;font-weight:normal;">新增</div>
<div class="a" style="left:312px;top:610px;width:81px;height:40px;border:1px solid #ddd;border-radius:4px;background:#fff"></div>
<svg class="a" style="left:323px;top:620.0px;" width="20" height="20" viewBox="0 0 20 20"><path d="M1.8 13.4 L11.2 4 L15.3 8.1 L5.9 17.5 L0.8 18.5 Z" fill="none" stroke="#5a5a5a" stroke-width="1.7" stroke-linejoin="round"/><path d="M1.2 18.1 L1.8 14.6 L4.8 17.5 Z" fill="#5a5a5a"/><path d="M13 2.2 L14.3 0.9 Q15.4 -0.1 16.5 1 L18.3 2.8 Q19.4 3.9 18.3 5 L17 6.3 Z" fill="#5a5a5a"/><path d="M4.5 14.8 L12.5 6.8" stroke="#5a5a5a" stroke-width="1.3"/></svg>
<div class="t" style="left:347px;top:619.0px;font-size:15px;line-height:22px;color:#555;font-weight:normal;">修改</div>
<div class="a" style="left:399px;top:610px;width:81px;height:40px;border:1px solid #ddd;border-radius:4px;background:#fff"></div>
<svg class="a" style="left:410px;top:620.0px;" width="20" height="20" viewBox="0 0 20 20"><path d="M3.6 4.9 L15 16.2 M15 4.9 L3.6 16.2" stroke="#5a5a5a" stroke-width="2.7" fill="none"/></svg>
<div class="t" style="left:434px;top:619.0px;font-size:15px;line-height:22px;color:#555;font-weight:normal;">删除</div>
<div class="a" style="left:486px;top:610px;width:112px;height:40px;border:1px solid #ddd;border-radius:4px;background:#fff"></div>
<svg class="a" style="left:497px;top:620.0px;" width="20" height="20" viewBox="0 0 20 20"><rect x="1" y="4.5" width="16.9" height="11.9" rx="0.6" fill="#5a5a5a"/><path d="M2.3 5.9 L9.5 13 L16.8 5.9 M2.3 15.2 L6.7 11.2 M16.8 15.2 L12.5 11.2" stroke="#fff" stroke-width="1.1" fill="none"/></svg>
<div class="t" style="left:521px;top:619.0px;font-size:15px;line-height:22px;color:#555;font-weight:normal;">群发邮件</div>
<div class="a" style="left:603px;top:610px;width:111px;height:40px;border:1px solid #ddd;border-radius:4px;background:#fff"></div>
<svg class="a" style="left:614px;top:620.0px;" width="20" height="20" viewBox="0 0 20 20"><path d="M1.7 3.2 H17.2 V15.1 H5 L1.8 18.4 Z" fill="none" stroke="#5a5a5a" stroke-width="1.3" stroke-linejoin="round"/></svg>
<div class="t" style="left:638px;top:619.0px;font-size:15px;line-height:22px;color:#555;font-weight:normal;">群发短信</div>
<div class="a" style="left:720px;top:610px;width:97px;height:40px;border:1px solid #ddd;border-radius:4px;background:#fff"></div>
<svg class="a" style="left:731px;top:620.0px;" width="20" height="20" viewBox="0 0 20 20"><circle cx="9.4" cy="9.7" r="7.9" fill="none" stroke="#5a5a5a" stroke-width="1.35"/><path d="M8.7 5.2 V10.2 H14.2" stroke="#5a5a5a" stroke-width="1.4" fill="none"/></svg>
<div class="t" style="left:755px;top:619.0px;font-size:15px;line-height:22px;color:#555;font-weight:normal;">时间轴</div>
<div class="a" style="left:822px;top:610px;width:111px;height:40px;border:1px solid #ddd;border-radius:4px;background:#fff"></div>
<svg class="a" style="left:833px;top:620.0px;" width="20" height="20" viewBox="0 0 20 20"><circle cx="9.4" cy="9.7" r="7.9" fill="none" stroke="#5a5a5a" stroke-width="1.35"/><path d="M8.7 5.2 V10.2 H14.2" stroke="#5a5a5a" stroke-width="1.4" fill="none"/></svg>
<div class="t" style="left:857px;top:619.0px;font-size:15px;line-height:22px;color:#555;font-weight:normal;">修改历史</div>
<div class="a" style="left:940px;top:610px;width:111px;height:40px;border:1px solid #ddd;border-radius:4px;background:#fff"></div>
<svg class="a" style="left:951px;top:620.0px;" width="20" height="20" viewBox="0 0 20 20"><path d="M1.2 1.5 V17.8 H18.5" stroke="#5a5a5a" stroke-width="1.4" fill="none"/><path d="M3.3 6.3 L8.2 4.1 L13.1 7.7 L17.9 5.3 M3.3 13.9 L8.2 10.2 L13.1 12.6 L17.9 9.3" stroke="#5a5a5a" stroke-width="1.2" fill="none"/></svg>
<div class="t" style="left:975px;top:619.0px;font-size:15px;line-height:22px;color:#555;font-weight:normal;">图表分析</div>
<div class="a" style="left:1057px;top:610px;width:81px;height:40px;border:1px solid #ddd;border-radius:4px;background:#fff"></div>
<svg class="a" style="left:1068px;top:620.0px;" width="20" height="20" viewBox="0 0 20 20"><rect x="8" y="1.4" width="2.8" height="5" fill="#5a5a5a"/><path d="M4.8 5.9 H14.1 L9.45 11.9 Z" fill="#5a5a5a"/><rect x="0.3" y="14.5" width="18.3" height="3.9" fill="#5a5a5a"/></svg>
<div class="t" style="left:1092px;top:619.0px;font-size:15px;line-height:22px;color:#555;font-weight:normal;">导入</div>
<div class="a" style="left:1143px;top:610px;width:81px;height:40px;border:1px solid #ddd;border-radius:4px;background:#fff"></div>
<svg class="a" style="left:1154px;top:620.0px;" width="20" height="20" viewBox="0 0 20 20"><path d="M9.5 1.4 L14.6 7.1 H4.4 Z" fill="#5a5a5a"/><rect x="8.2" y="7" width="2.6" height="5.3" fill="#5a5a5a"/><rect x="0.8" y="14.6" width="17.4" height="3.7" fill="#5a5a5a"/></svg>
<div class="t" style="left:1178px;top:619.0px;font-size:15px;line-height:22px;color:#555;font-weight:normal;">导出</div>
<div class="a" style="left:1230px;top:610px;width:81px;height:40px;border:1px solid #ddd;border-radius:4px;background:#fff"></div>
<svg class="a" style="left:1241px;top:620.0px;" width="20" height="20" viewBox="0 0 20 20"><circle cx="9.3" cy="10.85" r="8" fill="none" stroke="#f0b400" stroke-width="1.5"/><text x="9.3" y="15.5" text-anchor="middle" font-family="Liberation Sans" font-weight="bold" font-size="13" fill="#f0b400">?</text></svg>
<div class="t" style="left:1265px;top:619.0px;font-size:15px;line-height:22px;color:#555;font-weight:normal;">帮助</div>
<div class="a" style="left:221px;top:657px;width:1677px;height:46px;background:#f0f0f0"></div>
<div class="a" style="left:0;top:657px;width:1898px;height:100px;overflow:hidden">
<div class="t" style="left:231px;top:13.5px;font-size:15px;line-height:22px;color:#555;font-weight:bold;">姓名</div>
<div class="t" style="left:331px;top:13.5px;font-size:15px;line-height:22px;color:#555;font-weight:bold;">客户</div>
<div class="t" style="left:619px;top:13.5px;font-size:15px;line-height:22px;color:#555;font-weight:bold;">属性</div>
<div class="t" style="left:706px;top:13.5px;font-size:15px;line-height:22px;color:#555;font-weight:bold;">所屋部门</div>
<div class="t" style="left:819px;top:13.5px;font-size:15px;line-height:22px;color:#555;font-weight:bold;">职务</div>
<div class="t" style="left:919px;top:13.5px;font-size:15px;line-height:22px;color:#555;font-weight:bold;">组织角色</div>
<div class="t" style="left:1044px;top:13.5px;font-size:15px;line-height:22px;color:#555;font-weight:bold;">手机</div>
<div class="t" style="left:1173px;top:13.5px;font-size:15px;line-height:22px;color:#555;font-weight:bold;">邮箱</div>
<div class="t" style="left:1348px;top:13.5px;font-size:15px;line-height:22px;color:#555;font-weight:bold;">电话</div>
<div class="t" style="left:1473px;top:13.5px;font-size:15px;line-height:22px;color:#555;font-weight:bold;">任务</div>
<div class="t" style="left:1599px;top:13.5px;font-size:15px;line-height:22px;color:#555;font-weight:bold;">所有者</div>
<div class="t" style="left:1724px;top:13.5px;font-size:15px;line-height:22px;color:#555;font-weight:bold;">最后跟进时间</div>
<div class="t" style="left:1873px;top:13.5px;font-size:15px;line-height:22px;color:#555;font-weight:bold;">创建</div>
<div class="t" style="left:231px;top:62.5px;font-size:15px;line-height:22px;color:#333;font-weight:normal;">佳伟</div>
<div class="t" style="left:331px;top:62.5px;font-size:15px;line-height:22px;color:#3a8cd5;font-weight:normal;">闲时科技</div>
<div class="t" style="left:595px;top:58px;width:80px;height:30px;border-radius:15px;background:#8e4a8c;color:#fff;font-size:15px;line-height:28px;-webkit-text-stroke:0.35px #fff;text-align:center">合作伙伴</div>
<div class="t" style="left:1044px;top:62.5px;font-size:15px;line-height:22px;color:#3a8cd5;font-weight:normal;letter-spacing:-0.4px">17618222111</div>
<div class="t" style="left:1173px;top:62.5px;font-size:15px;line-height:22px;color:#3a8cd5;font-weight:normal;">dwwdwj@qq.com</div>
<div class="t" style="left:1473px;top:62.5px;font-size:15px;line-height:22px;color:#3a8cd5;font-weight:normal;">新增</div>
<div class="t" style="left:1599px;top:62.5px;font-size:15px;line-height:22px;color:#333;font-weight:normal;">许三多</div>
<div class="t" style="left:1873px;top:62.5px;font-size:15px;line-height:22px;color:#333;font-weight:normal;">2022</div>
</div>
<div class="a" style="left:1898px;top:703px;width:21px;height:54px;background:#f0f0f0"></div>
<svg class="a" style="left:1898px;top:703px;" width="21" height="20" viewBox="0 0 21 20"><path d="M6 12 L10.5 7.5 L15 12" stroke="#555" stroke-width="2.2" fill="none"/></svg>
</body></html>
